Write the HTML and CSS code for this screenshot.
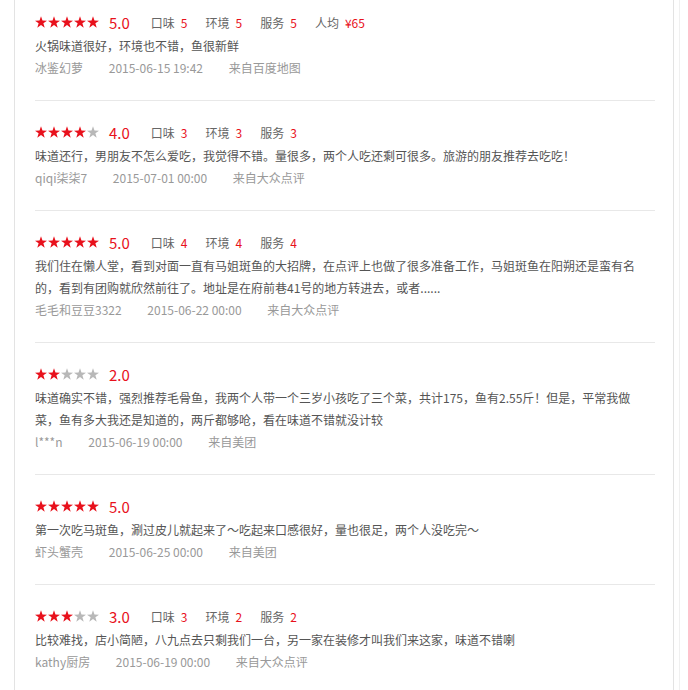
FILE: index.html
```html
<!DOCTYPE html>
<html lang="zh-CN">
<head>
    <meta charset="UTF-8">
    <meta name="viewport" content="width=device-width, initial-scale=1.0">
    <title>评论</title>
    <link rel="stylesheet" href="styles.css">
</head>
<body>
    <svg class="defs" width="0" height="0">
        <symbol id="star" viewBox="0 0 12 12">
            <polygon points="6,0.3 7.47,4.58 12,4.65 8.38,7.37 9.7,11.7 6,9.1 2.3,11.7 3.62,7.37 0,4.65 4.53,4.58"/>
        </symbol>
    </svg>

    <div class="card">
        <div class="review">
            <div class="review-head">
                <svg class="stars" width="64" height="12">
                    <use href="#star" x="0" width="12" height="12" class="on"/>
                    <use href="#star" x="13" width="12" height="12" class="on"/>
                    <use href="#star" x="26" width="12" height="12" class="on"/>
                    <use href="#star" x="39" width="12" height="12" class="on"/>
                    <use href="#star" x="52" width="12" height="12" class="on"/>
                </svg>
                <span class="score">5.0</span>
                <span class="sub">口味<em>5</em></span>
                <span class="sub">环境<em>5</em></span>
                <span class="sub">服务<em>5</em></span>
                <span class="sub">人均<em>¥65</em></span>
            </div>
            <p class="review-text">火锅味道很好，环境也不错，鱼很新鲜</p>
            <div class="review-meta">
                <span>冰鉴幻萝</span>
                <span>2015-06-15 19:42</span>
                <span>来自百度地图</span>
            </div>
        </div>

        <div class="review">
            <div class="review-head">
                <svg class="stars" width="64" height="12">
                    <use href="#star" x="0" width="12" height="12" class="on"/>
                    <use href="#star" x="13" width="12" height="12" class="on"/>
                    <use href="#star" x="26" width="12" height="12" class="on"/>
                    <use href="#star" x="39" width="12" height="12" class="on"/>
                    <use href="#star" x="52" width="12" height="12" class="off"/>
                </svg>
                <span class="score">4.0</span>
                <span class="sub">口味<em>3</em></span>
                <span class="sub">环境<em>3</em></span>
                <span class="sub">服务<em>3</em></span>
            </div>
            <p class="review-text">味道还行，男朋友不怎么爱吃，我觉得不错。量很多，两个人吃还剩可很多。旅游的朋友推荐去吃吃！</p>
            <div class="review-meta">
                <span>qiqi柒柒7</span>
                <span>2015-07-01 00:00</span>
                <span>来自大众点评</span>
            </div>
        </div>

        <div class="review">
            <div class="review-head">
                <svg class="stars" width="64" height="12">
                    <use href="#star" x="0" width="12" height="12" class="on"/>
                    <use href="#star" x="13" width="12" height="12" class="on"/>
                    <use href="#star" x="26" width="12" height="12" class="on"/>
                    <use href="#star" x="39" width="12" height="12" class="on"/>
                    <use href="#star" x="52" width="12" height="12" class="on"/>
                </svg>
                <span class="score">5.0</span>
                <span class="sub">口味<em>4</em></span>
                <span class="sub">环境<em>4</em></span>
                <span class="sub">服务<em>4</em></span>
            </div>
            <p class="review-text">我们住在懒人堂，看到对面一直有马姐斑鱼的大招牌，在点评上也做了很多准备工作，马姐斑鱼在阳朔还是蛮有名的，看到有团购就欣然前往了。地址是在府前巷41号的地方转进去，或者......</p>
            <div class="review-meta">
                <span>毛毛和豆豆3322</span>
                <span>2015-06-22 00:00</span>
                <span>来自大众点评</span>
            </div>
        </div>

        <div class="review">
            <div class="review-head">
                <svg class="stars" width="64" height="12">
                    <use href="#star" x="0" width="12" height="12" class="on"/>
                    <use href="#star" x="13" width="12" height="12" class="on"/>
                    <use href="#star" x="26" width="12" height="12" class="off"/>
                    <use href="#star" x="39" width="12" height="12" class="off"/>
                    <use href="#star" x="52" width="12" height="12" class="off"/>
                </svg>
                <span class="score">2.0</span>
            </div>
            <p class="review-text">味道确实不错，强烈推荐毛骨鱼，我两个人带一个三岁小孩吃了三个菜，共计175，鱼有2.55斤！但是，平常我做菜，鱼有多大我还是知道的，两斤都够呛，看在味道不错就没计较</p>
            <div class="review-meta">
                <span>l***n</span>
                <span>2015-06-19 00:00</span>
                <span>来自美团</span>
            </div>
        </div>

        <div class="review">
            <div class="review-head">
                <svg class="stars" width="64" height="12">
                    <use href="#star" x="0" width="12" height="12" class="on"/>
                    <use href="#star" x="13" width="12" height="12" class="on"/>
                    <use href="#star" x="26" width="12" height="12" class="on"/>
                    <use href="#star" x="39" width="12" height="12" class="on"/>
                    <use href="#star" x="52" width="12" height="12" class="on"/>
                </svg>
                <span class="score">5.0</span>
            </div>
            <p class="review-text">第一次吃马斑鱼，涮过皮儿就起来了～吃起来口感很好，量也很足，两个人没吃完～</p>
            <div class="review-meta">
                <span>虾头蟹壳</span>
                <span>2015-06-25 00:00</span>
                <span>来自美团</span>
            </div>
        </div>

        <div class="review">
            <div class="review-head">
                <svg class="stars" width="64" height="12">
                    <use href="#star" x="0" width="12" height="12" class="on"/>
                    <use href="#star" x="13" width="12" height="12" class="on"/>
                    <use href="#star" x="26" width="12" height="12" class="on"/>
                    <use href="#star" x="39" width="12" height="12" class="off"/>
                    <use href="#star" x="52" width="12" height="12" class="off"/>
                </svg>
                <span class="score">3.0</span>
                <span class="sub">口味<em>3</em></span>
                <span class="sub">环境<em>2</em></span>
                <span class="sub">服务<em>2</em></span>
            </div>
            <p class="review-text">比较难找，店小简陋，八九点去只剩我们一台，另一家在装修才叫我们来这家，味道不错喇</p>
            <div class="review-meta">
                <span>kathy厨房</span>
                <span>2015-06-19 00:00</span>
                <span>来自大众点评</span>
            </div>
        </div>
    </div>
</body>
</html>
```

FILE: styles.css
```css
body {
    margin: 0;
    font-family: "Noto Sans CJK SC", "Noto Sans", sans-serif;
    font-size: 12px;
    color: #666;
    background: #fff;
}

.defs {
    position: absolute;
    width: 0;
    height: 0;
}

.card {
    margin-left: 14px;
    width: 620px;
    min-height: 690px;
    padding: 0 18px 0 20px;
    border-left: 1px solid #e3e3e3;
    border-right: 1px solid #e3e3e3;
    box-shadow: 5px 0 0 0 #fff, 6px 0 0 0 #f0f0f0;
}

.review {
    padding: 21px 0 21px;
    border-bottom: 1px solid #e8e8e8;
}

.review:first-child {
    padding-top: 12px;
}

.review-head {
    display: flex;
    align-items: center;
    height: 20px;
}

.stars {
    display: block;
    margin-right: 10px;
}

.stars .on {
    fill: #e8111c;
}

.stars .off {
    fill: #b8b8b8;
}

.score {
    font-size: 15px;
    color: #e8111c;
    margin-right: 21px;
}

.sub {
    font-size: 12px;
    color: #666;
    margin-right: 18px;
}

.sub em {
    font-style: normal;
    color: #e8111c;
    margin-left: 6px;
}

.review-text {
    margin: 3px 10px 0 0;
    line-height: 22px;
    color: #555;
}

.review-meta {
    line-height: 22px;
    color: #999;
}

.review-meta span {
    margin-right: 23px;
}
```
